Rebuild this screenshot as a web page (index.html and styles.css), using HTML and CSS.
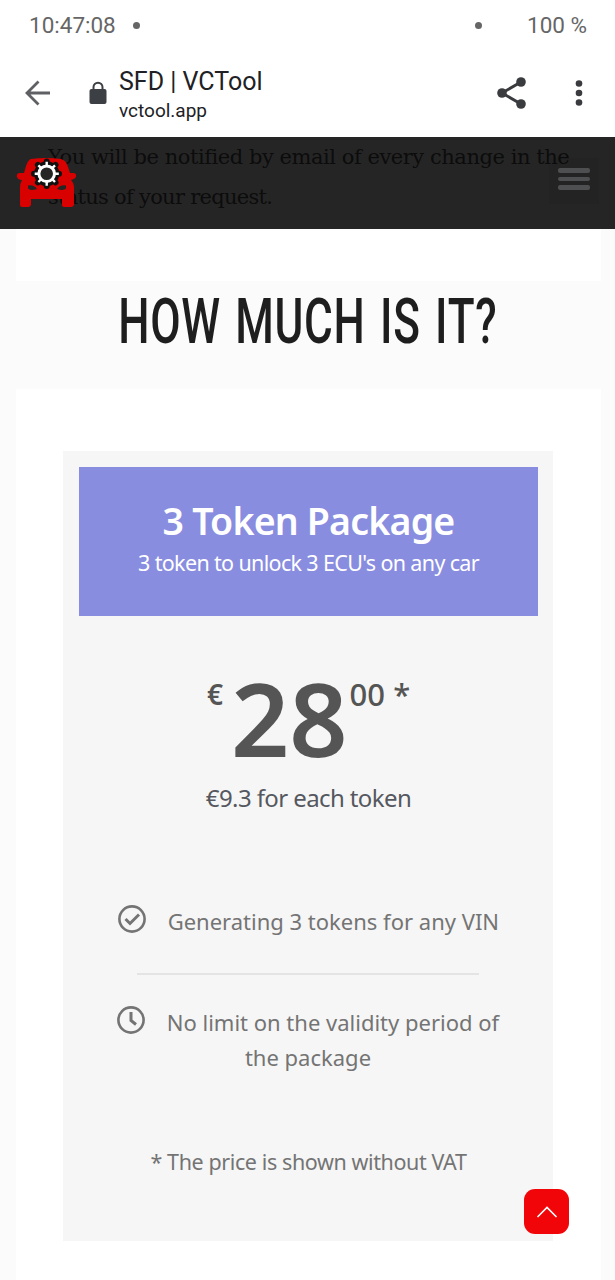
FILE: index.html
```html
<!DOCTYPE html>
<html lang="en">
  <head>
    <title>SFD | VCTool</title>
    <meta charset="UTF-8" />
    <meta name="viewport" content="width=device-width, initial-scale=1.0" />
    <link rel="stylesheet" href="styles.css">
  </head>
  <body>
    <div class="status-bar">
      <span class="clock">10:47:08</span>
      <span class="dot"></span>
      <span class="dot dot-right"></span>
      <span class="battery">100 %</span>
    </div>

    <div class="browser-bar">
      <svg class="back" width="26" height="26" viewBox="0 0 26 26" fill="none" stroke="#5f6063" stroke-width="2.8">
        <path d="M25 13H2.5M13.5 1.5L2 13l11.5 11.5" />
      </svg>
      <svg class="lock" width="18" height="24" viewBox="0 0 18 24">
        <path d="M4.5 10V6.2a4.5 4.5 0 0 1 9 0V10" fill="none" stroke="#3c3f43" stroke-width="2" />
        <rect x="0.5" y="8" width="17" height="15" rx="2" fill="#3c3f43" />
      </svg>
      <div class="page-info">
        <div class="page-title">SFD | VCTool</div>
        <div class="page-url">vctool.app</div>
      </div>
      <svg class="share" width="30" height="32" viewBox="0 0 30 32" fill="#3a3b3f">
        <path d="M24 5L5 16l19 11" fill="none" stroke="#3a3b3f" stroke-width="3" />
        <circle cx="24" cy="5" r="4.8" />
        <circle cx="5" cy="16" r="4.8" />
        <circle cx="24" cy="27" r="4.8" />
      </svg>
      <svg class="more" width="8" height="28" viewBox="0 0 8 28" fill="#3a3b3f">
        <circle cx="4" cy="4.5" r="3.3" />
        <circle cx="4" cy="14" r="3.3" />
        <circle cx="4" cy="23.5" r="3.3" />
      </svg>
    </div>

    <main class="page">
      <header class="site-header">
        <svg class="logo" width="60" height="50" viewBox="0 0 60 50">
          <path d="M15 1Q30-1 45 1Q50 2 52 9L54 15L58 15Q61 16 60 19Q59 21 55 22Q58 25 58 30V47Q57 49 55 49H49Q46 49 46 47V41H15V47Q14 49 12 49H6Q4 49 4 47V30Q4 25 6 22Q2 22 1 19Q0 16 3 15L8 15L10 8Q12 2 15 1Z" fill="#d90000" />
          <path d="M12 27.500Q18 26.500 21 31Q14 33 12 30.500ZM50 27.500Q44 26.500 41 31Q48 33 50 30.500Z" fill="#252525" />
          <circle cx="30.700" cy="15.700" r="12.500" fill="#111" />
          <path d="M30.700 6V3.500M30.700 25.500v2.500M20 15.700h-2M41 15.700h2M23.400 8.400l-1.500-1.500M38 8.400l1.500-1.500M23.400 23l-1.500 1.500M38 23l1.500 1.500" stroke="#111" stroke-width="6" stroke-linecap="round" />
          <circle cx="30.700" cy="15.700" r="7.800" fill="#252525" stroke="#fff" stroke-width="3" />
          <path d="M30.700 8V3.700M30.700 23.500v4.300M23 15.700h-4.300M38.500 15.700h4.300M25.200 10.200L22.400 7.400M36.200 10.200L39 7.400M25.200 21.200L22.400 24M36.200 21.200L39 24" stroke="#fff" stroke-width="2.400" />
        </svg>
        <button class="menu-btn"><span></span><span></span><span></span></button>
      </header>

      <section class="panel notice">
        <p class="line-one">You will be notified by email of every change in the</p>
        <p class="line-two">status of your request.</p>
      </section>

      <h1><span>HOW MUCH IS IT?</span></h1>

      <section class="panel pricing">
        <div class="card">
          <div class="card-header">
            <h2>3 Token Package</h2>
            <p>3 token to unlock 3 ECU's on any car</p>
          </div>

          <div class="price">
            <span class="currency">€</span>
            <span class="amount">28</span>
            <span class="cents">00 *</span>
          </div>
          <p class="per-token">€9.3 for each token</p>

          <ul class="features">
            <li>
              <svg width="28" height="28" viewBox="0 0 28 28" fill="none" stroke="#747474">
                <circle cx="14" cy="14" r="12.6" stroke-width="2.6" />
                <path d="M7.500 14l4.500 4.500L21 9.500" stroke-width="3" />
              </svg>
              <span class="vin">Generating 3 tokens for any VIN</span>
            </li>
            <li class="limit">
              <svg width="28" height="28" viewBox="0 0 28 28" fill="none" stroke="#747474">
                <circle cx="14" cy="14" r="12.6" stroke-width="2.6" />
                <path d="M14 6v8.500l5 4" stroke-width="3" />
              </svg>
              <span class="validity">No limit on the validity period of</span>
              <div class="second-line">the package</div>
            </li>
          </ul>

          <p class="vat">* The price is shown without VAT</p>
        </div>
      </section>

      <button class="to-top">
        <svg width="22" height="14" viewBox="0 0 22 14" fill="none" stroke="#fff" stroke-width="1.6">
          <path d="M1.500 12L11 2.500L20.500 12" />
        </svg>
      </button>
    </main>
  </body>
</html>
```

FILE: styles.css
```css
* {
  box-sizing: border-box;
}
body {
  margin: 0;
  background-color: #fff;
  font-family: "Noto Sans", sans-serif;
}
h1, h2, p, ul {
  margin: 0;
  padding: 0;
  font-weight: normal;
}
button {
  border: none;
  padding: 0;
  cursor: pointer;
}

/* phone status bar */
.status-bar {
  display: flex;
  align-items: center;
  height: 50px;
  padding: 0 28px 0 29px;
  font-family: Roboto, sans-serif;
  font-size: 22.5px;
  color: #666;
}
.clock {
  width: 104px;
}
.dot {
  width: 7px;
  height: 7px;
  border-radius: 50%;
  background-color: #666;
}
.dot-right {
  margin-left: 335px;
}
.battery {
  margin-left: auto;
}

/* browser toolbar */
.browser-bar {
  display: flex;
  align-items: center;
  height: 87px;
  padding: 0 32px 2px 24.5px;
  font-family: Roboto, sans-serif;
  color: #202124;
}
.lock {
  margin-left: 38px;
}
.page-info {
  margin-left: 12.5px;
  padding-top: 7px;
}
.page-title {
  font-size: 25px;
  line-height: 30px;
}
.page-url {
  font-size: 19px;
  line-height: 28px;
}
.share {
  margin-left: auto;
  margin-right: 48px;
}

.page {
  position: relative;
  height: 1143px;
  overflow: hidden;
  background-color: #fbfbfb;
}
.panel {
  margin: 0 14px 0 16px;
  background-color: #fff;
}

/* sticky header, page text shows through */
.site-header {
  position: absolute;
  top: 0;
  left: 0;
  right: 0;
  display: flex;
  justify-content: space-between;
  height: 92px;
  padding: 21px 16px 0 16px;
  background-color: rgba(0, 0, 0, 0.853);
}
.menu-btn {
  display: flex;
  flex-direction: column;
  align-items: center;
  gap: 4px;
  width: 50px;
  height: 46px;
  padding-top: 10px;
  background-color: rgba(0, 0, 0, 0.03);
}
.menu-btn span {
  width: 32px;
  height: 4.6px;
  border-radius: 2px;
  background-color: #4e4f51;
}

.notice {
  height: 144px;
  padding: 0 0 0 32px;
  font-family: "DejaVu Serif", serif;
  font-size: 21px;
  line-height: 40px;
  white-space: nowrap;
  color: #555;
}
.line-one {
  letter-spacing: -0.46px;
}
.line-two {
  letter-spacing: -0.72px;
}

h1 {
  height: 108px;
  text-align: center;
  font-family: Roboto, sans-serif;
  font-size: 63px;
  font-weight: 500;
  line-height: 82px;
  word-spacing: 4px;
  letter-spacing: 1px;
  white-space: nowrap;
  color: #1e1e1e;
}
h1 span {
  display: inline-block;
  transform: scaleX(0.7);
}

/* pricing card */
.pricing {
  padding: 62px 48px 39px 47px;
}
.card {
  height: 790px;
  padding: 16px 15px 0 16px;
  background-color: #f6f6f6;
  text-align: center;
  white-space: nowrap;
}
.card-header {
  height: 149px;
  padding-top: 31px;
  background-color: #898ddf;
  color: #fff;
}
.card-header h2 {
  font-size: 37.5px;
  font-weight: 600;
  line-height: 46px;
  letter-spacing: -0.8px;
}
.card-header p {
  font-size: 21.5px;
  line-height: 38px;
  letter-spacing: -0.65px;
}
.price {
  display: flex;
  justify-content: center;
  align-items: flex-start;
  height: 154px;
  padding-top: 60px;
  font-weight: 600;
  color: #555;
}
.currency {
  padding-top: 1px;
  font-size: 28px;
  line-height: 34px;
}
.amount {
  margin: 0 2px 0 8px;
  font-size: 102px;
  line-height: 84px;
}
.cents {
  font-size: 31px;
  font-weight: 500;
  line-height: 36px;
}
.per-token {
  font-size: 24px;
  line-height: 56px;
  letter-spacing: -0.6px;
  color: #55585e;
}

.features {
  list-style: none;
  font-size: 22px;
  line-height: 35px;
  color: #747474;
}
.features li {
  padding-top: 78px;
}
.features li svg {
  vertical-align: -3px;
  margin-right: 16px;
}
.features .limit {
  margin: 34px 59px 0 58px;
  padding-top: 30px;
  border-top: 2px solid #e4e4e4;
}
.limit svg {
  margin-left: -20px;
}
.limit .validity {
  margin-right: -20px;
}
.vat {
  margin-top: 69px;
  font-size: 21.5px;
  line-height: 35px;
  letter-spacing: -0.4px;
  color: #747474;
}

.to-top {
  position: absolute;
  top: 1052px;
  right: 46px;
  display: flex;
  justify-content: center;
  align-items: center;
  width: 45px;
  height: 45px;
  border-radius: 11px;
  background-color: #f20509;
}
```
